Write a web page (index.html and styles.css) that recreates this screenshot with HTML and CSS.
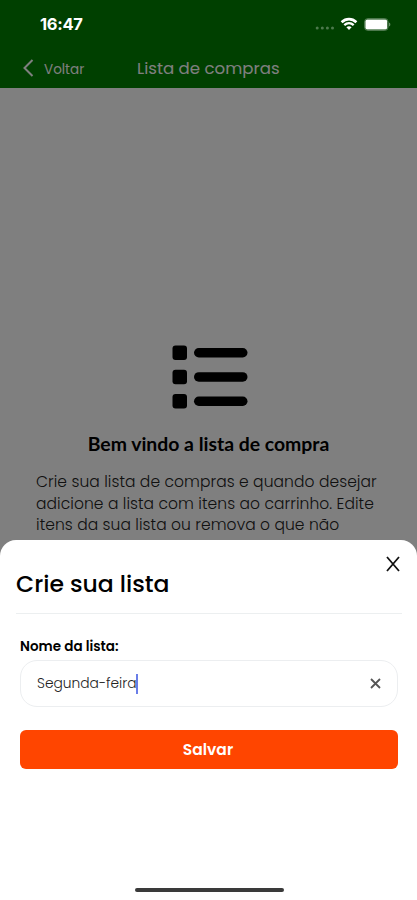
FILE: index.html
```html
<!DOCTYPE html>
<html lang="pt-BR">
<head>
    <meta charset="UTF-8">
    <meta name="viewport" content="width=device-width, initial-scale=1.0">
    <title>Lista de compras</title>
    <link rel="stylesheet" href="styles.css">
</head>
<body>
    <div class="screen">
        <header>
            <div class="status-bar">
                <span class="time">16:47</span>
                <div class="status-icons">
                    <svg class="signal" width="20" height="4" viewBox="0 0 20 4">
                        <circle cx="2.2" cy="2" r="1.5"/>
                        <circle cx="7.3" cy="2" r="1.5"/>
                        <circle cx="12.4" cy="2" r="1.5"/>
                        <circle cx="17.5" cy="2" r="1.5"/>
                    </svg>
                    <svg class="wifi" width="18" height="14" viewBox="0 0 18 14">
                        <path d="M1.6 5.2C6 1.1 12 1.1 16.4 5.2" fill="none" stroke="#fff" stroke-width="2.7"/>
                        <path d="M4.3 8.1C7.1 5.6 10.9 5.6 13.7 8.1" fill="none" stroke="#fff" stroke-width="2.3"/>
                        <path d="M6.4 10.2C7.9 8.9 10.1 8.9 11.6 10.2L9 13z" fill="#fff"/>
                    </svg>
                    <svg class="battery" width="27" height="13" viewBox="0 0 27 13">
                        <rect x="0.5" y="0.5" width="23.6" height="12" rx="3.5" fill="none" stroke="#fff" stroke-opacity="0.3"/>
                        <rect x="1.4" y="1.4" width="21.8" height="10.2" rx="2" fill="#fff"/>
                        <path d="M25.2 4.5v4c1.5-.6 1.5-3.4 0-4z" fill="#fff" fill-opacity="0.5"/>
                    </svg>
                </div>
            </div>
            <nav class="nav-bar">
                <a href="#" class="back">
                    <svg width="12" height="18" viewBox="0 0 12 18">
                        <path d="M10.5 1L2.5 9l8 8" fill="none" stroke="currentColor" stroke-width="2"/>
                    </svg>
                    <span class="back-label">Voltar</span>
                </a>
                <span class="nav-title">Lista de compras</span>
            </nav>
        </header>

        <main class="welcome">
            <svg class="list-icon" width="76" height="64" viewBox="0 0 76 64">
                <rect x="0.5" y="0.5" width="14.5" height="14.5" rx="3"/>
                <rect x="22" y="3" width="53.5" height="9.5" rx="4.75"/>
                <rect x="0.5" y="24.7" width="14.5" height="14.5" rx="3"/>
                <rect x="22" y="27.2" width="53.5" height="9.5" rx="4.75"/>
                <rect x="0.5" y="49" width="14.5" height="14.5" rx="3"/>
                <rect x="22" y="51.5" width="53.5" height="9.5" rx="4.75"/>
            </svg>
            <h1>Bem vindo a lista de compra</h1>
            <p>
                <span class="line">Crie sua lista de compras e quando desejar</span>
                <span class="line">adicione a lista com itens ao carrinho. Edite</span>
                <span class="line">itens da sua lista ou remova o que não</span>
            </p>
        </main>

        <div class="overlay"></div>

        <section class="sheet">
            <button class="close-btn" aria-label="Fechar">
                <svg width="14" height="16" viewBox="0 0 14 16">
                    <path d="M1 1l12 14M13 1L1 15" fill="none" stroke="#111" stroke-width="1.8"/>
                </svg>
            </button>
            <h2>Crie sua lista</h2>
            <form class="list-form">
                <span class="label">Nome da lista:</span>
                <div class="field">
                    <span class="value">Segunda-feira</span>
                    <span class="caret"></span>
                    <svg class="clear" width="11" height="11" viewBox="0 0 11 11">
                        <path d="M1 1l9 9M10 1l-9 9" fill="none" stroke="#555" stroke-width="1.8"/>
                    </svg>
                </div>
                <button type="button" class="save-btn">Salvar</button>
            </form>
            <div class="home-indicator"></div>
        </section>
    </div>
</body>
</html>
```

FILE: styles.css
```css
* {
    box-sizing: border-box;
}

body {
    font-family: Poppins, Inter, sans-serif;
    background-color: #fff;
    margin: 0;
    color: #000;
}

.screen {
    position: relative;
    height: 900px;
    overflow: hidden;
}

header {
    height: 88px;
    background: #008000;
}

.status-bar {
    position: relative;
    z-index: 2;
    display: flex;
    justify-content: space-between;
    align-items: center;
    height: 48px;
    padding: 0 26px 0 40px;
    color: #fff;
}

.time {
    font-family: Inter, sans-serif;
    font-size: 16.5px;
    font-weight: 700;
    letter-spacing: -0.3px;
}

.status-icons {
    display: flex;
    align-items: center;
}

.signal {
    fill: #fff;
    opacity: 0.3;
    margin: 8px 5px 0 0;
}

.wifi {
    margin-right: 6px;
}

.nav-bar {
    display: flex;
    align-items: center;
    height: 40px;
    padding-left: 22px;
    color: #fff;
}

.back {
    display: flex;
    align-items: center;
    gap: 10px;
    width: 115px;
    color: inherit;
    text-decoration: none;
}

.back-label {
    font-size: 13.5px;
    margin-top: 3px;
}

.nav-title {
    font-size: 16.6px;
}

.welcome {
    display: flex;
    flex-direction: column;
    align-items: center;
    padding-top: 257px;
}

.list-icon {
    margin-left: 2px;
}

h1 {
    font-family: Lato, sans-serif;
    font-size: 19.4px;
    font-weight: 700;
    line-height: 24px;
    margin: 23px 0 15px;
    white-space: nowrap;
}

.welcome p {
    align-self: flex-start;
    margin: 0 0 0 36px;
    font-size: 15.5px;
    font-weight: 300;
    line-height: 21.5px;
    color: #222;
}

.line {
    display: block;
    white-space: nowrap;
    letter-spacing: 0.08px;
}

.overlay {
    position: absolute;
    inset: 0;
    background: rgba(0, 0, 0, 0.5);
}

.sheet {
    position: absolute;
    left: 0;
    right: 0;
    bottom: 0;
    height: 360px;
    padding: 26px 15px 8px 16px;
    display: flex;
    flex-direction: column;
    background: #fff;
    border-radius: 16px 16px 0 0;
}

.close-btn {
    position: absolute;
    top: 16px;
    right: 17px;
    padding: 0;
    border: none;
    background: none;
    line-height: 0;
    cursor: pointer;
}

h2 {
    margin: 0;
    padding-bottom: 11px;
    border-bottom: 1px solid #eceff0;
    font-size: 23.5px;
    font-weight: 500;
    line-height: 36px;
}

.list-form {
    display: flex;
    flex-direction: column;
    padding: 23px 4px 0;
}

.label {
    font-size: 13.5px;
    font-weight: 600;
    line-height: 20px;
}

.field {
    display: flex;
    align-items: center;
    height: 47px;
    margin: 3px 0 23px;
    padding: 0 16px;
    border: 1px solid #eceef0;
    border-radius: 17px;
}

.value {
    font-size: 13.8px;
    font-weight: 300;
    color: #222;
}

.caret {
    width: 2px;
    height: 20px;
    margin-left: -1px;
    background: #6a7ee8;
}

.clear {
    margin-left: auto;
}

.save-btn {
    height: 39px;
    padding: 0 2px 0 0;
    border: none;
    border-radius: 6px;
    background: #ff4500;
    color: #fff;
    font: inherit;
    font-size: 15.5px;
    font-weight: 600;
    cursor: pointer;
}

.home-indicator {
    width: 149px;
    height: 4px;
    margin: auto auto 0;
    border-radius: 2px;
    background: #3a3a3a;
}
```
